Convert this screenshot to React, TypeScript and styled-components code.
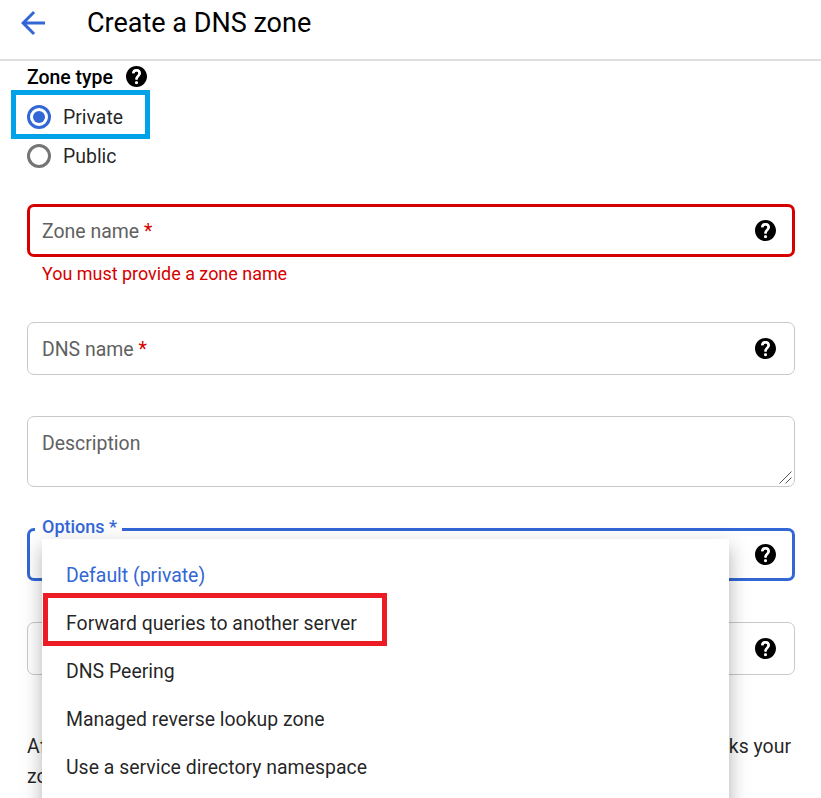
import React from "react";
import styled, { createGlobalStyle, css } from "styled-components";

const GlobalStyle = createGlobalStyle`
  *, *::before, *::after { box-sizing: border-box; }
  html, body { margin: 0; height: 100%; overflow: hidden; background: #fff; }
  body { font-family: Roboto, "Liberation Sans", sans-serif; color: rgba(0, 0, 0, 0.87); }
`;

const Page = styled.div`
  width: 821px;
  height: 798px;
  overflow: hidden;
  background: #fff;
  font-size: 19.45px;
`;

const Header = styled.header`
  display: flex;
  align-items: center;
  gap: 39px;
  height: 61px;
  padding: 0 18px 13px 15px;
  border-bottom: 2px solid #e0e0e0;
`;

const BackButton = styled.button`
  display: flex;
  width: 36px;
  height: 36px;
  padding: 0;
  border: 0;
  background: none;
  color: #3367d6;
`;

const Title = styled.h1`
  margin: 0 0 0 -3px;
  font-size: 27px;
  font-weight: 400;
  line-height: 36px;
  color: #000;
  white-space: nowrap;
`;

const Form = styled.main`
  display: flex;
  flex-direction: column;
  padding: 2px 26px 0 27px;
`;

const GroupLabel = styled.div`
  display: flex;
  align-items: center;
  gap: 13px;
  height: 28px;
  font-weight: 500;
  color: #000;
  svg { margin-bottom: 2px; }
`;

const RadioGroup = styled.div`
  display: flex;
  flex-direction: column;
  align-items: flex-start;
  margin: -1px 0 0 -16px;
`;

const RadioOption = styled.label<{ $highlighted?: boolean }>`
  display: flex;
  align-items: center;
  gap: 12px;
  width: 139px;
  height: ${(p) => (p.$highlighted ? 49 : 35)}px;
  padding: ${(p) => (p.$highlighted ? "5px 0 0 11px" : "0 0 0 16px")};
  ${(p) => p.$highlighted && css`border: 5px solid #00a2e8;`}
`;

const RadioMark = styled.span<{ $checked?: boolean }>`
  display: grid;
  place-items: center;
  width: 24px;
  height: 24px;
  margin-bottom: ${(p) => (p.$checked ? 0 : 1)}px;
  border: 3px solid ${(p) => (p.$checked ? "#3367d6" : "#757575")};
  border-radius: 50%;
  &::after {
    content: "";
    width: 12px;
    height: 12px;
    border-radius: 50%;
    background: ${(p) => (p.$checked ? "#3367d6" : "transparent")};
  }
`;

const Field = styled.div<{ $invalid?: boolean; $top: number; $tall?: boolean }>`
  display: flex;
  align-items: ${(p) => (p.$tall ? "flex-end" : "center")};
  justify-content: space-between;
  height: ${(p) => (p.$tall ? 71 : 53)}px;
  margin-top: ${(p) => p.$top}px;
  padding: ${(p) => (p.$tall ? "0 2px 2px 14px" : p.$invalid ? "0 16px 0 12px" : "0 18px 0 14px")};
  border: ${(p) => (p.$invalid ? "3px solid #d50000" : "1px solid #c9c9c9")};
  border-radius: 7px;
`;

const Placeholder = styled.span<{ $raised?: boolean }>`
  margin-top: 2px;
  color: #616161;
  white-space: nowrap;
  ${(p) => p.$raised && css`align-self: flex-start; margin-top: 15px; line-height: 23px;`}
`;

const Required = styled.span`
  color: #d50000;
`;

const ErrorText = styled.p`
  height: 24px;
  margin: 5px 0 0 15px;
  font-size: 17.95px;
  line-height: 24px;
  color: #d50000;
`;

const SelectField = styled.fieldset`
  display: flex;
  justify-content: flex-end;
  position: relative;
  height: 64px;
  min-width: 0;
  margin: 30px 0 0;
  padding: 0 16px 0 5px;
  border: 3px solid #3367d6;
  border-radius: 7px;
`;

const SelectLabel = styled.legend`
  width: 87px;
  height: 25px;
  padding: 0 0 0 7px;
  font-size: 18px;
  font-weight: 500;
  line-height: 19px;
  color: #3367d6;
  white-space: nowrap;
`;

const Menu = styled.ul`
  position: absolute;
  z-index: 2;
  top: -3px;
  left: 12px;
  width: 687px;
  height: 340px;
  margin: 0;
  padding: 12px 0;
  list-style: none;
  background: #fff;
  box-shadow: 0 7.5px 7.5px -4.5px rgba(0, 0, 0, 0.2), 0 12px 15px 1.5px rgba(0, 0, 0, 0.14),
    0 4.5px 21px 3px rgba(0, 0, 0, 0.12);
`;

const MenuItem = styled.li<{ $selected?: boolean; $highlighted?: boolean }>`
  display: flex;
  align-items: center;
  height: 48px;
  padding: 0 24px;
  color: ${(p) => (p.$selected ? "#3367d6" : "rgba(0, 0, 0, 0.87)")};
  white-space: nowrap;
  ${(p) =>
    p.$highlighted &&
    css`
      width: 344px;
      height: 53px;
      margin: -6px 0 1px 1px;
      padding: 7px 0 0 18px;
      border: 5px solid #ed1c24;
    `}
`;

const HelpSlot = styled.span`
  display: flex;
  height: 21px;
  margin-top: 2px;
`;

const Note = styled.p`
  width: 780px;
  margin: 57px 0 0;
  line-height: 30px;
`;

const NoteLine = styled.span<{ $spread?: boolean }>`
  display: flex;
  width: 764px;
  justify-content: ${(p) => (p.$spread ? "space-between" : "flex-start")};
  white-space: nowrap;
`;

const HelpIcon = () => (
  <svg width="21" height="21" viewBox="2 2 20 20" fill="#000" aria-label="Help">
    <path d="M12 2C6.48 2 2 6.48 2 12s4.48 10 10 10 10-4.48 10-10S17.52 2 12 2zm1 17h-2v-2h2v2zm2.07-7.75-.9.92C13.45 12.9 13 13.5 13 15h-2v-.5c0-1.1.45-2.1 1.17-2.83l1.24-1.26c.37-.36.59-.86.59-1.41 0-1.1-.9-2-2-2s-2 .9-2 2H8c0-2.21 1.79-4 4-4s4 1.79 4 4c0 .88-.36 1.68-.93 2.25z" stroke="none" />
    <path d="M9 9c0-1.7 1.3-3 3-3s3 1.3 3 3c0 2.3-3 2.6-3 5.5" fill="none" stroke="#fff" strokeWidth="2.4" />
    <circle cx="12" cy="17.9" r="1.4" fill="#fff" />
  </svg>
);

const BackIcon = () => (
  <svg width="36" height="36" viewBox="0 0 24 24" fill="currentColor">
    <path d="M20 11H7.83l5.59-5.59L12 4l-8 8 8 8 1.41-1.41L7.83 13H20v-2z" />
  </svg>
);

const ResizeGrip = () => (
  <svg width="13" height="13" viewBox="0 0 13 13" fill="none" stroke="#555" strokeWidth="1">
    <path d="M.5 12.5l12-12M6.5 12.5l6-6" />
  </svg>
);

const options = [
  "Default (private)",
  "Forward queries to another server",
  "DNS Peering",
  "Managed reverse lookup zone",
  "Use a service directory namespace",
];

export default function App() {
  return (
    <Page>
      <GlobalStyle />
      <Header>
        <BackButton aria-label="Back"><BackIcon /></BackButton>
        <Title>Create a DNS zone</Title>
      </Header>
      <Form>
        <GroupLabel>Zone type <HelpIcon /></GroupLabel>
        <RadioGroup>
          <RadioOption $highlighted><RadioMark $checked />Private</RadioOption>
          <RadioOption><RadioMark />Public</RadioOption>
        </RadioGroup>
        <Field $invalid $top={30}>
          <Placeholder>Zone name <Required>*</Required></Placeholder>
          <HelpIcon />
        </Field>
        <ErrorText>You must provide a zone name</ErrorText>
        <Field $top={36}>
          <Placeholder>DNS name <Required>*</Required></Placeholder>
          <HelpIcon />
        </Field>
        <Field $tall $top={41}>
          <Placeholder $raised>Description</Placeholder>
          <ResizeGrip />
        </Field>
        <SelectField>
          <SelectLabel>Options *</SelectLabel>
          <HelpSlot><HelpIcon /></HelpSlot>
          <Menu>
            {options.map((label, i) => (
              <MenuItem key={label} $selected={i === 0} $highlighted={i === 1}>{label}</MenuItem>
            ))}
          </Menu>
        </SelectField>
        <Field $top={41}>
          <Placeholder />
          <HelpIcon />
        </Field>
        <Note>
          <NoteLine $spread><span>After creating your zone,</span><span>networks your</span></NoteLine>
          <NoteLine>zone is visible on.</NoteLine>
        </Note>
      </Form>
    </Page>
  );
}
